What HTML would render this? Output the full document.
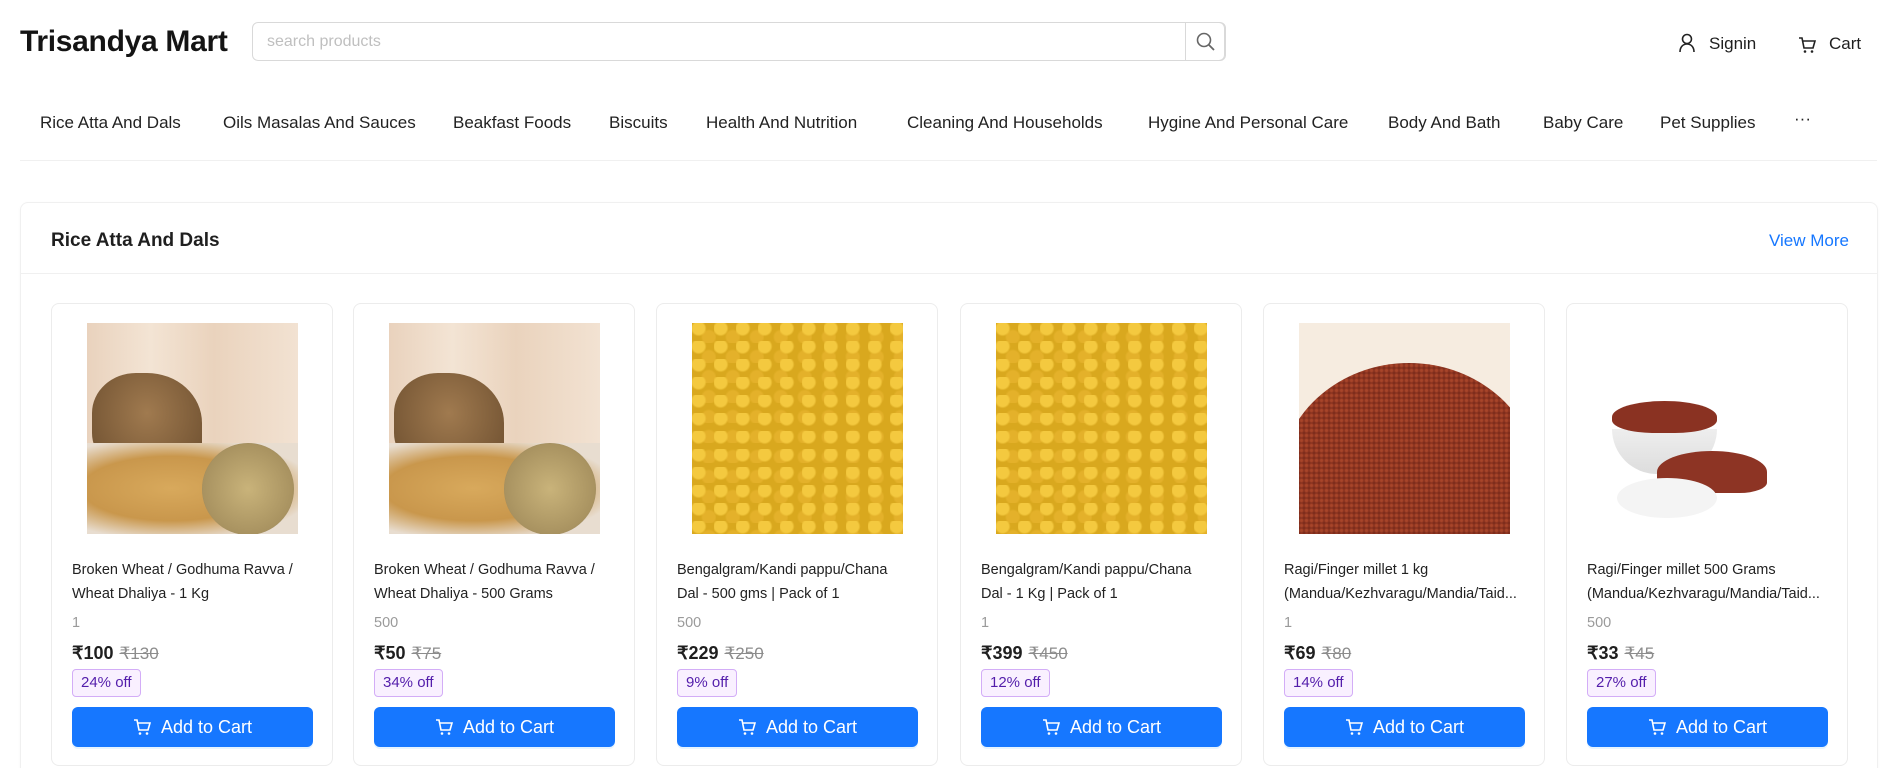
<!DOCTYPE html>
<html><head><meta charset="utf-8"><style>
*{box-sizing:border-box;margin:0;padding:0}
html,body{width:1897px;height:768px;overflow:hidden}
body{background:#fff;font-family:"Liberation Sans",sans-serif;color:#1f1f1f;position:relative}
.abs{position:absolute}
.logo{left:20px;top:25px;font-size:30px;font-weight:bold;color:#141414;letter-spacing:-0.3px}
.search{left:252px;top:22px;width:974px;height:39px;border:1px solid #d9d9d9;border-radius:6px}
.search span{position:absolute;left:14px;top:10px;font-size:16px;color:#bfbfbf}
.search .btn{position:absolute;right:0;top:-1px;width:40px;height:39px;border:1px solid #d9d9d9;border-radius:0 6px 6px 0}
.top{font-size:17px;top:34px;color:#1f1f1f}
.nav{top:113px;font-size:17px;color:#222}
.line{left:20px;top:160px;width:1857px;height:1px;background:#f0f0f0}
.sec{left:20px;top:202px;width:1858px;height:600px;border:1px solid #f0f0f0;border-radius:8px;box-shadow:0 1px 3px rgba(0,0,0,.03)}
.sec h2{position:absolute;left:30px;top:27px;font-size:19px;font-weight:600;color:#1f1f1f}
.sec .vm{position:absolute;right:28px;top:28px;font-size:17px;color:#1677ff}
.sec .hl{position:absolute;left:0;top:70px;width:100%;height:1px;background:#f0f0f0}
.card{top:303px;width:282px;height:463px;border:1px solid #ececec;border-radius:8px;background:#fff}
.img{position:absolute;left:35px;top:19px;width:211px;height:211px;overflow:hidden}
.t{position:absolute;left:20px;top:254px;width:245px;font-size:14.5px;line-height:24px;color:#222;white-space:nowrap;overflow:hidden;text-overflow:ellipsis}
.q{position:absolute;left:20px;top:311px;font-size:14.5px;color:#9a9a9a}
.p{position:absolute;left:20px;top:339px;font-size:18px;font-weight:600;color:#1f1f1f}
.p s{font-weight:normal;color:#8c8c8c;font-size:17px;margin-left:6px}
.b{position:absolute;left:20px;top:365px;height:28px;padding:0 8px;line-height:26px;font-size:15px;color:#531dab;background:#f9f0ff;border:1px solid #d3adf7;border-radius:4px}
.ac{position:absolute;left:20px;top:403px;width:241px;height:40px;background:#1677ff;border-radius:6px;color:#fff;font-size:18px;display:flex;align-items:center;justify-content:center;gap:10px;box-shadow:0 2px 0 rgba(5,145,255,.1)}
</style></head><body>
<div class="abs logo">Trisandya Mart</div>
<div class="abs search"><span>search products</span><div class="btn"><svg width="40" height="38" viewBox="0 0 40 38"><circle cx="18" cy="17" r="6.5" fill="none" stroke="#666" stroke-width="1.6"/><path d="M23 22l5 5" stroke="#666" stroke-width="1.8"/></svg></div></div>
<svg class="abs" style="left:1678px;top:33px" width="18" height="20" viewBox="0 0 18 20"><circle cx="9" cy="6" r="4.5" fill="none" stroke="#222" stroke-width="1.6"/><path d="M2 19c0-5 3-8 7-8s7 3 7 8" fill="none" stroke="#222" stroke-width="1.6"/></svg>
<div class="abs top" style="left:1709px">Signin</div>
<svg class="abs" style="left:1798px;top:36px" width="18" height="18" viewBox="0 0 18 18"><path d="M1 2h3l2 10h9l2-7H5" fill="none" stroke="#222" stroke-width="1.6"/><circle cx="7" cy="15.5" r="1.3" fill="#222"/><circle cx="14" cy="15.5" r="1.3" fill="#222"/></svg>
<div class="abs top" style="left:1829px">Cart</div>
<div class="abs nav" style="left:40px">Rice Atta And Dals</div>
<div class="abs nav" style="left:223px">Oils Masalas And Sauces</div>
<div class="abs nav" style="left:453px">Beakfast Foods</div>
<div class="abs nav" style="left:609px">Biscuits</div>
<div class="abs nav" style="left:706px">Health And Nutrition</div>
<div class="abs nav" style="left:907px">Cleaning And Households</div>
<div class="abs nav" style="left:1148px">Hygine And Personal Care</div>
<div class="abs nav" style="left:1388px">Body And Bath</div>
<div class="abs nav" style="left:1543px">Baby Care</div>
<div class="abs nav" style="left:1660px">Pet Supplies</div>
<div class="abs nav" style="left:1794px;top:109px">···</div>
<div class="abs line"></div>
<div class="abs sec"><h2>Rice Atta And Dals</h2><div class="vm">View More</div><div class="hl"></div></div>

<div class="abs card" style="left:51px"><div class="img" style="background:linear-gradient(90deg,#e9d2bd,#f3e4d4 30%,#ead3bd 60%,#f2e2d2)"><div style="position:absolute;left:5px;top:50px;width:110px;height:100px;background:radial-gradient(ellipse at 50% 40%,#a07a4f,#6b4d2e);border-radius:40% 50% 30% 40%"></div><div style="position:absolute;left:0;top:120px;width:211px;height:91px;background:radial-gradient(ellipse at 40% 50%,#d8a95c,#c9974c 50%,#e8ddd0 80%)"></div><div style="position:absolute;left:115px;top:120px;width:92px;height:92px;border-radius:50%;background:radial-gradient(#c9b37a,#a89260 70%,#555 74%,#999 80%)"></div></div>
<div class="t">Broken Wheat / Godhuma Ravva /<br>Wheat Dhaliya - 1 Kg</div><div class="q">1</div><div class="p">₹100<s>₹130</s></div><div class="b">24% off</div><div class="ac"><svg width="18" height="18" viewBox="0 0 18 18"><path d="M1 2h3l2 10h9l2-7H5" fill="none" stroke="#fff" stroke-width="1.6"/><circle cx="7" cy="15.5" r="1.3" fill="#fff"/><circle cx="14" cy="15.5" r="1.3" fill="#fff"/></svg>Add to Cart</div></div>

<div class="abs card" style="left:353px"><div class="img" style="background:linear-gradient(90deg,#e9d2bd,#f3e4d4 30%,#ead3bd 60%,#f2e2d2)"><div style="position:absolute;left:5px;top:50px;width:110px;height:100px;background:radial-gradient(ellipse at 50% 40%,#a07a4f,#6b4d2e);border-radius:40% 50% 30% 40%"></div><div style="position:absolute;left:0;top:120px;width:211px;height:91px;background:radial-gradient(ellipse at 40% 50%,#d8a95c,#c9974c 50%,#e8ddd0 80%)"></div><div style="position:absolute;left:115px;top:120px;width:92px;height:92px;border-radius:50%;background:radial-gradient(#c9b37a,#a89260 70%,#555 74%,#999 80%)"></div></div>
<div class="t">Broken Wheat / Godhuma Ravva /<br>Wheat Dhaliya - 500 Grams</div><div class="q">500</div><div class="p">₹50<s>₹75</s></div><div class="b">34% off</div><div class="ac"><svg width="18" height="18" viewBox="0 0 18 18"><path d="M1 2h3l2 10h9l2-7H5" fill="none" stroke="#fff" stroke-width="1.6"/><circle cx="7" cy="15.5" r="1.3" fill="#fff"/><circle cx="14" cy="15.5" r="1.3" fill="#fff"/></svg>Add to Cart</div></div>

<div class="abs card" style="left:656px"><div class="img" style="background:radial-gradient(circle at 30% 30%,#f4c93f 0 6px,transparent 8px),radial-gradient(circle at 70% 70%,#e4b12a 0 6px,transparent 8px),#d9a81e;background-size:22px 18px,24px 20px,auto"></div>
<div class="t">Bengalgram/Kandi pappu/Chana<br>Dal - 500 gms | Pack of 1</div><div class="q">500</div><div class="p">₹229<s>₹250</s></div><div class="b">9% off</div><div class="ac"><svg width="18" height="18" viewBox="0 0 18 18"><path d="M1 2h3l2 10h9l2-7H5" fill="none" stroke="#fff" stroke-width="1.6"/><circle cx="7" cy="15.5" r="1.3" fill="#fff"/><circle cx="14" cy="15.5" r="1.3" fill="#fff"/></svg>Add to Cart</div></div>

<div class="abs card" style="left:960px"><div class="img" style="background:radial-gradient(circle at 30% 30%,#f4c93f 0 6px,transparent 8px),radial-gradient(circle at 70% 70%,#e4b12a 0 6px,transparent 8px),#d9a81e;background-size:22px 18px,24px 20px,auto"></div>
<div class="t">Bengalgram/Kandi pappu/Chana<br>Dal - 1 Kg | Pack of 1</div><div class="q">1</div><div class="p">₹399<s>₹450</s></div><div class="b">12% off</div><div class="ac"><svg width="18" height="18" viewBox="0 0 18 18"><path d="M1 2h3l2 10h9l2-7H5" fill="none" stroke="#fff" stroke-width="1.6"/><circle cx="7" cy="15.5" r="1.3" fill="#fff"/><circle cx="14" cy="15.5" r="1.3" fill="#fff"/></svg>Add to Cart</div></div>

<div class="abs card" style="left:1263px"><div class="img" style="background:#f6ece0"><div style="position:absolute;left:-20px;top:40px;width:260px;height:240px;border-radius:50% 50% 0 0;background:radial-gradient(circle,#a8452a 1px,#7a2a1a 3px);background-size:5px 5px;background-color:#8e3520"></div></div>
<div class="t">Ragi/Finger millet 1 kg<br>(Mandua/Kezhvaragu/Mandia/Taid...</div><div class="q">1</div><div class="p">₹69<s>₹80</s></div><div class="b">14% off</div><div class="ac"><svg width="18" height="18" viewBox="0 0 18 18"><path d="M1 2h3l2 10h9l2-7H5" fill="none" stroke="#fff" stroke-width="1.6"/><circle cx="7" cy="15.5" r="1.3" fill="#fff"/><circle cx="14" cy="15.5" r="1.3" fill="#fff"/></svg>Add to Cart</div></div>

<div class="abs card" style="left:1566px"><div class="img" style="background:#fff"><div style="position:absolute;left:10px;top:106px;width:105px;height:45px;background:linear-gradient(#eee,#ddd);border-radius:0 0 50px 50px"></div><div style="position:absolute;left:10px;top:78px;width:105px;height:32px;background:#8a3222;border-radius:50% 50% 40% 40%"></div><div style="position:absolute;left:55px;top:128px;width:110px;height:42px;background:#8d3424;border-radius:60% 60% 30% 30%"></div><div style="position:absolute;left:15px;top:155px;width:100px;height:40px;background:#f4f4f4;border-radius:50%"></div></div>
<div class="t">Ragi/Finger millet 500 Grams<br>(Mandua/Kezhvaragu/Mandia/Taid...</div><div class="q">500</div><div class="p">₹33<s>₹45</s></div><div class="b">27% off</div><div class="ac"><svg width="18" height="18" viewBox="0 0 18 18"><path d="M1 2h3l2 10h9l2-7H5" fill="none" stroke="#fff" stroke-width="1.6"/><circle cx="7" cy="15.5" r="1.3" fill="#fff"/><circle cx="14" cy="15.5" r="1.3" fill="#fff"/></svg>Add to Cart</div></div>
</body></html>
